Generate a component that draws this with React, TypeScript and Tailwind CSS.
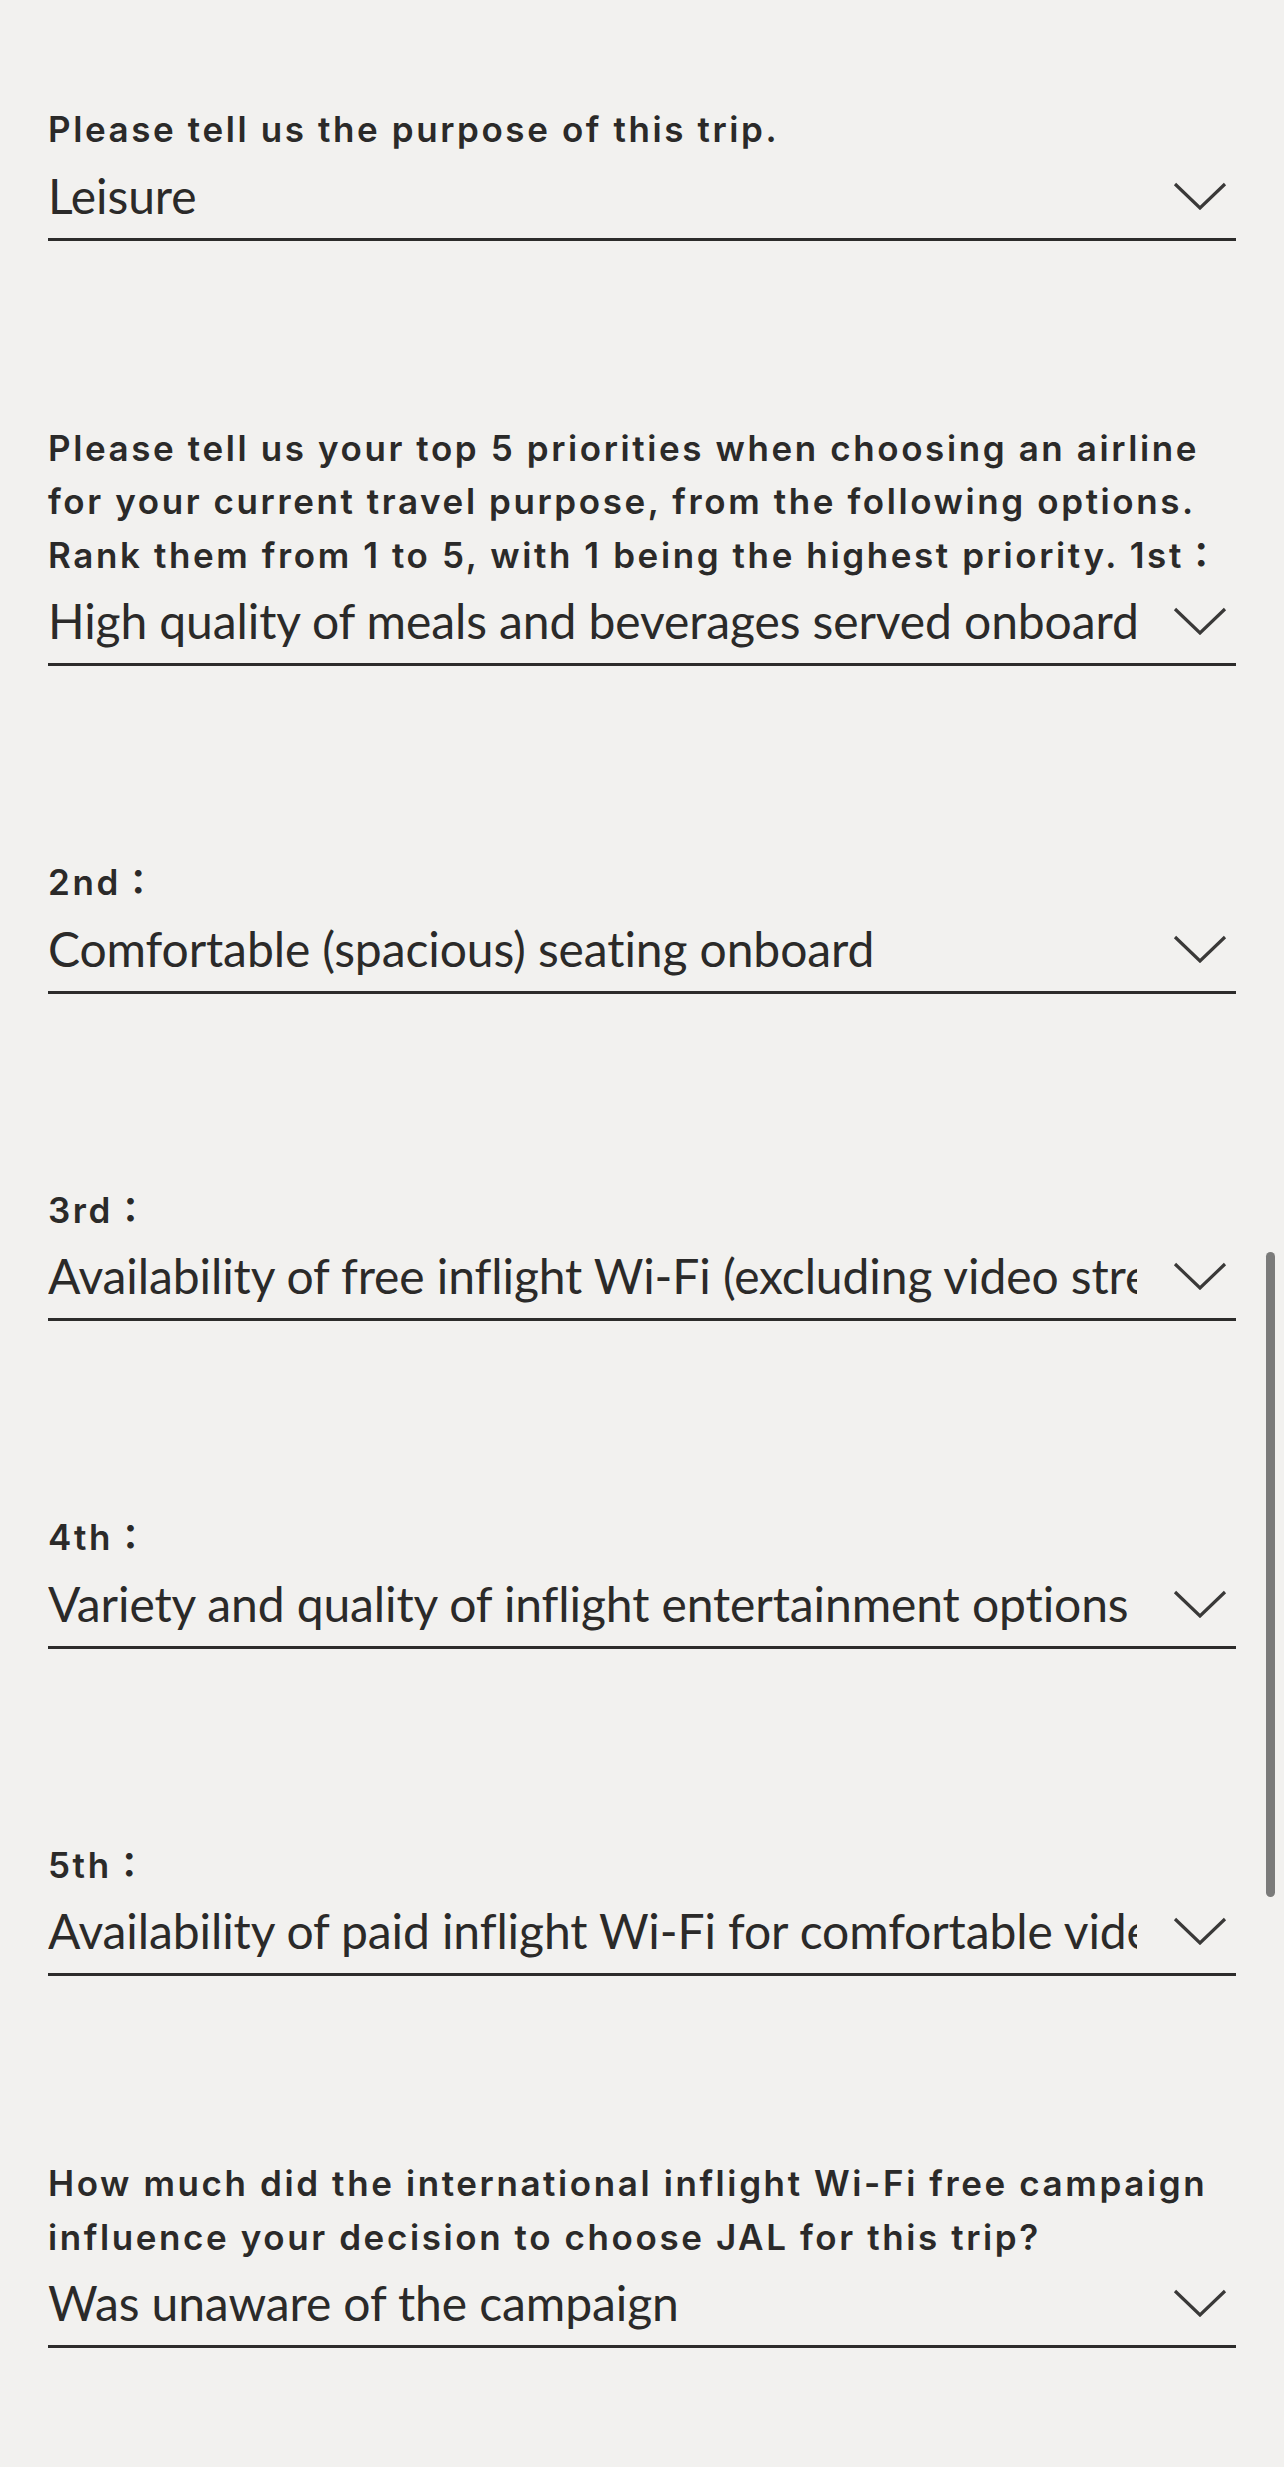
type Field = {
  id: string;
  label: string[];
  value: string;
  kind: "question" | "rank";
};

const fields: Field[] = [
  {
    id: "purpose",
    kind: "question",
    label: ["Please tell us the purpose of this trip."],
    value: "Leisure"
  },
  {
    id: "rank1",
    kind: "question",
    label: [
      "Please tell us your top 5 priorities when choosing an airline",
      "for your current travel purpose, from the following options.",
      "Rank them from 1 to 5, with 1 being the highest priority. 1st："
    ],
    value: "High quality of meals and beverages served onboard"
  },
  {
    id: "rank2",
    kind: "rank",
    label: ["2nd："],
    value: "Comfortable (spacious) seating onboard"
  },
  {
    id: "rank3",
    kind: "rank",
    label: ["3rd："],
    value: "Availability of free inflight Wi-Fi (excluding video streaming)"
  },
  {
    id: "rank4",
    kind: "rank",
    label: ["4th："],
    value: "Variety and quality of inflight entertainment options"
  },
  {
    id: "rank5",
    kind: "rank",
    label: ["5th："],
    value: "Availability of paid inflight Wi-Fi for comfortable video streaming"
  },
  {
    id: "campaign",
    kind: "question",
    label: [
      "How much did the international inflight Wi-Fi free campaign",
      "influence your decision to choose JAL for this trip?"
    ],
    value: "Was unaware of the campaign"
  }
];

function Chevron() {
  return (
    <svg width="54" height="28" viewBox="0 0 54 28" fill="none" className="shrink-0">
      <path d="M2 2 L27 26 L52 2" stroke="#3a3938" strokeWidth="3.2" strokeLinejoin="miter" />
    </svg>
  );
}

function SelectField({ field, first }: { field: Field; first: boolean }) {
  const spacing = first ? "" : field.kind === "rank" ? "mt-[190px]" : "mt-[181px]";
  return (
    <div className={spacing}>
      <div className="font-['Inter','Noto_Sans','Noto_Sans_CJK_JP',sans-serif] text-[35px] font-semibold leading-[53.5px] tracking-[2.6px] text-[#2b2a29]">
        {field.label.map((line) => (
          <div key={line} className="whitespace-nowrap">
            {line}
          </div>
        ))}
      </div>
      <div className="mt-[9px] flex items-center border-b-[3px] border-[#2d2c2b] pb-[12px]">
        <div className="w-[1089px] overflow-hidden whitespace-nowrap font-['Lato',sans-serif] text-[48px] leading-[60px] tracking-[-0.1px] text-[#2b2a29]">
          {field.value}
        </div>
        <div className="ml-auto mr-[9px] flex items-center">
          <Chevron />
        </div>
      </div>
    </div>
  );
}

export default function App() {
  return (
    <div className="relative min-h-[2467px] w-full bg-[#f2f1ef] px-[48px] pt-[103px]">
      {fields.map((field, index) => (
        <SelectField key={field.id} field={field} first={index === 0} />
      ))}
      <div className="absolute right-[9px] top-[1252px] h-[645px] w-[9px] rounded-full bg-[#7b7b7a]" />
    </div>
  );
}
